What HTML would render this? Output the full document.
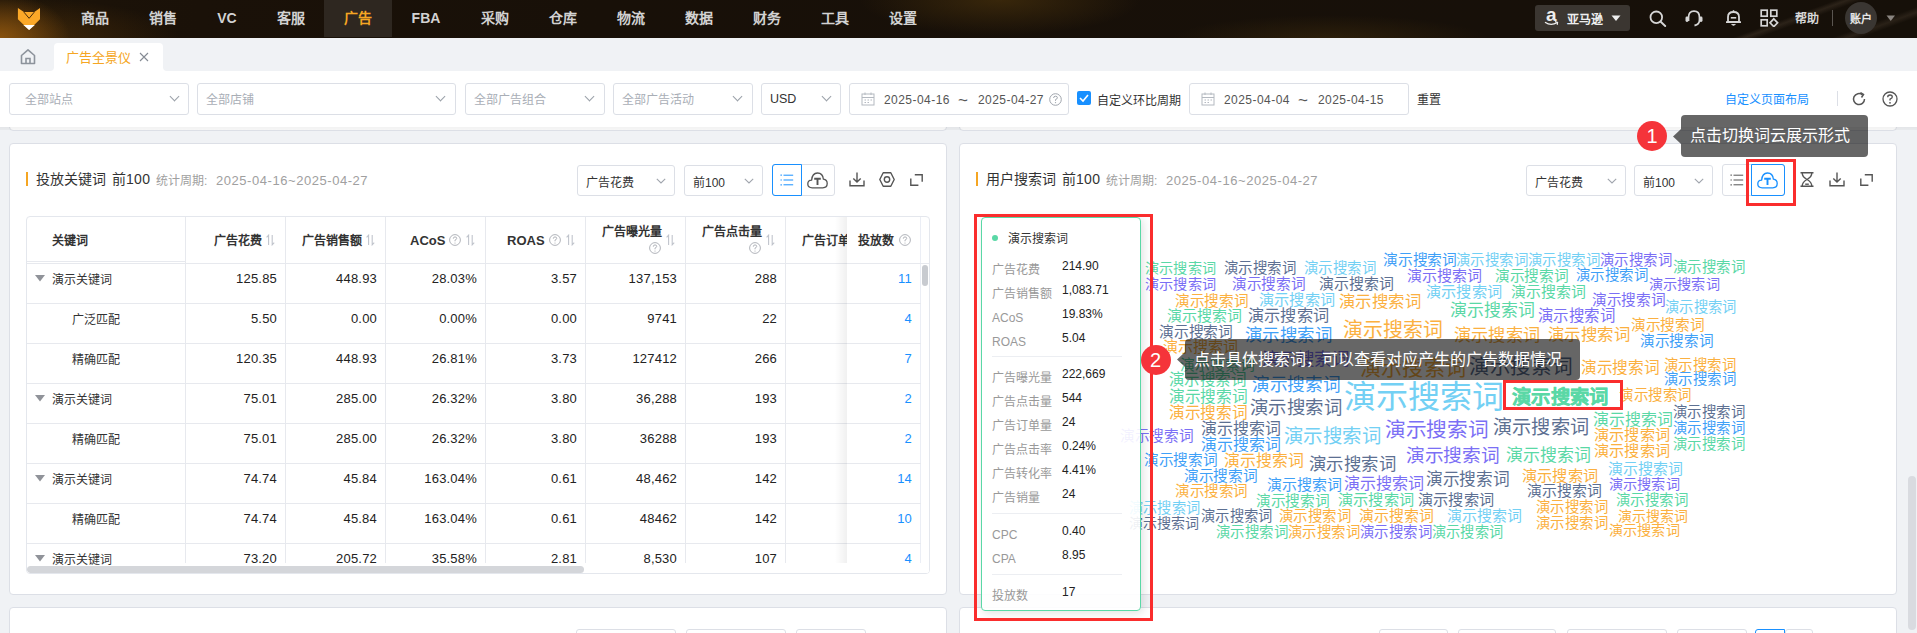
<!DOCTYPE html>
<html lang="zh-CN"><head><meta charset="utf-8">
<style>
*{box-sizing:border-box;margin:0;padding:0}
html,body{width:1917px;height:633px;overflow:hidden}
body{position:relative;background:#f0f2f5;font-family:"Liberation Sans",sans-serif;color:#333;font-size:12px}
.a{position:absolute}
/* header */
#hd{left:0;top:0;width:1917px;height:38px;background:
 radial-gradient(ellipse 70px 45px at 0 38px,rgba(150,90,15,.85),rgba(150,90,15,0) 100%),
 radial-gradient(ellipse 160px 40px at 20px 38px,rgba(90,55,10,.6),rgba(90,55,10,0) 100%),
 radial-gradient(ellipse 140px 35px at 1000px 0,rgba(70,48,12,.7),rgba(70,48,12,0) 100%),
 radial-gradient(ellipse 160px 25px at 1330px 40px,rgba(60,42,12,.6),rgba(60,42,12,0) 100%),
 linear-gradient(160deg,rgba(0,0,0,0) 628px,rgba(120,100,80,.22) 632px,rgba(0,0,0,0) 637px,rgba(0,0,0,0) 662px,rgba(120,100,80,.2) 667px,rgba(0,0,0,0) 672px),
 linear-gradient(90deg,#1c1308 0,#1a1108 200px,#181008 600px,#171009 1500px,#161009 1917px);}
.nav{top:0;height:37px;line-height:37px;font-size:14px;font-weight:bold;color:#d2d2d2;text-align:center}
.nav.on{background:#2e2720;color:#f5a623}
.sel{background:#fff;border:1px solid #dcdfe6;border-radius:3px;height:32px}
.ph{color:#a9aeb6;font-size:12px}
.chev{width:7px;height:7px;border-right:1.2px solid #9aa0a8;border-bottom:1.2px solid #9aa0a8;transform:rotate(45deg)}
.dt{top:9px;font-size:12px;color:#555;letter-spacing:0.45px}
.card{background:#fff;border:1px solid #dcdfe6;border-radius:4px}
</style></head><body>
<div id="hd" class="a">
  <svg class="a" style="left:17px;top:7px" width="24" height="24" viewBox="0 0 24 24">
    <path d="M0.9 1 L6.9 5.1 L17.3 5.1 L23 1 L23 12.2 L12.1 23.1 L0.9 12.2 Z" fill="#fba828"/>
    <path d="M6.9 5.1 L12.1 11.3 L17.3 5.1" fill="none" stroke="#4a2c08" stroke-width="1"/>
    <path d="M6.4 17.9 L17.8 17.9 L12.1 23.1 Z" fill="#fff"/>
  </svg>
</div>
<div class="a nav" style="left:61px;width:68px">商品</div>
<div class="a nav" style="left:129px;width:68px">销售</div>
<div class="a nav" style="left:197px;width:60px">VC</div>
<div class="a nav" style="left:257px;width:68px">客服</div>
<div class="a nav on" style="left:324px;width:68px">广告</div>
<div class="a nav" style="left:392px;width:68px">FBA</div>
<div class="a nav" style="left:461px;width:68px">采购</div>
<div class="a nav" style="left:529px;width:68px">仓库</div>
<div class="a nav" style="left:597px;width:68px">物流</div>
<div class="a nav" style="left:665px;width:68px">数据</div>
<div class="a nav" style="left:733px;width:68px">财务</div>
<div class="a nav" style="left:801px;width:68px">工具</div>
<div class="a nav" style="left:869px;width:68px">设置</div>

<!-- header right -->
<div class="a" style="left:1535px;top:5px;width:95px;height:26px;background:#3b3631;border-radius:3px"></div>
<span class="a" style="left:1546px;top:5px;font-size:19px;line-height:20px;font-weight:bold;color:#eee">a</span>
<svg class="a" style="left:1544px;top:21px" width="15" height="6" viewBox="0 0 15 6"><path d="M1 1.2 Q7 5.2 13 1.6" fill="none" stroke="#eee" stroke-width="1.3"/><path d="M11 0.6 L13.6 1.3 L13.2 3.8" fill="none" stroke="#eee" stroke-width="1.1"/></svg>
<span class="a" style="left:1567px;top:10px;font-size:12px;font-weight:bold;color:#eee">亚马逊</span>
<svg class="a" style="left:1611px;top:15px" width="10" height="7" viewBox="0 0 10 7"><path d="M0.5 0.5 H9.5 L5 6 Z" fill="#eee"/></svg>
<svg class="a" style="left:1649px;top:10px" width="18" height="17" viewBox="0 0 18 17"><circle cx="7.3" cy="7.3" r="5.8" fill="none" stroke="#d6d6d6" stroke-width="1.8"/><path d="M11.5 11.5 L16.2 16" stroke="#d6d6d6" stroke-width="1.9" stroke-linecap="round"/></svg>
<svg class="a" style="left:1684px;top:9px" width="20" height="18" viewBox="0 0 20 18"><path d="M4.5 12 V8.5 Q4.5 2.2 10 2.2 Q15.5 2.2 15.5 8.5 V11 Q15.5 15.5 10.5 16.5" fill="none" stroke="#d6d6d6" stroke-width="1.8"/><rect x="1.5" y="7.5" width="3" height="5.5" rx="1.4" fill="#d6d6d6"/><rect x="15.5" y="7.5" width="3" height="5.5" rx="1.4" fill="#d6d6d6"/></svg>
<svg class="a" style="left:1724px;top:9px" width="19" height="18" viewBox="0 0 19 18"><path d="M4 13 V8 Q4 3 9.5 3 Q15 3 15 8 V13 Z M2 13.2 H17" fill="none" stroke="#d6d6d6" stroke-width="1.8" stroke-linejoin="round"/><path d="M6.8 8.8 H12.2" stroke="#d6d6d6" stroke-width="1.6"/><path d="M7.6 15 Q9.5 17.5 11.4 15" fill="#d6d6d6" stroke="#d6d6d6" stroke-width="1.2"/><path d="M9.5 1.2 V3" stroke="#d6d6d6" stroke-width="1.5"/></svg>
<svg class="a" style="left:1760px;top:9px" width="19" height="18" viewBox="0 0 19 18"><rect x="1.2" y="1.2" width="6" height="6" fill="none" stroke="#d6d6d6" stroke-width="1.7"/><rect x="10.8" y="1.2" width="6" height="6" fill="none" stroke="#d6d6d6" stroke-width="1.7"/><rect x="1.2" y="10.8" width="6" height="6" fill="none" stroke="#d6d6d6" stroke-width="1.7"/><path d="M13.8 9.8 L17.6 13.8 L13.8 17.6 L10 13.8 Z" fill="none" stroke="#d6d6d6" stroke-width="1.7"/></svg>
<span class="a" style="left:1795px;top:9px;font-size:12px;font-weight:bold;color:#d6d6d6">帮助</span>
<div class="a" style="left:1832px;top:10px;width:1px;height:16px;background:#5a5550"></div>
<div class="a" style="left:1845px;top:2px;width:32px;height:32px;border-radius:50%;background:#3a3632"></div>
<span class="a" style="left:1850px;top:10px;font-size:11px;font-weight:bold;color:#e6e6e6;letter-spacing:-0.5px">账户</span>
<svg class="a" style="left:1886px;top:15px" width="10" height="7" viewBox="0 0 10 7"><path d="M0.5 0.5 H9 L4.75 6 Z" fill="#8a8580"/></svg>
<!-- tabs -->
<div class="a" style="left:0;top:38px;width:1917px;height:33px;background:#f0f2f5"></div>
<div class="a" style="left:50px;top:67px;width:117px;height:4px;background:#fff"></div>
<div class="a" style="left:50px;top:67px;width:4px;height:4px;background:#f0f2f5;border-radius:0 0 4px 0"></div>
<div class="a" style="left:163px;top:67px;width:4px;height:4px;background:#f0f2f5;border-radius:0 0 0 4px"></div>
<div class="a" style="left:54px;top:43px;width:109px;height:28px;background:#fff;border-radius:4px 4px 0 0"></div>
<div class="a" style="left:66px;top:44px;height:28px;line-height:28px;font-size:13px;color:#f5a623">广告全景仪</div>

<!-- home + tab extras -->
<svg class="a" style="left:20px;top:48px" width="16" height="17" viewBox="0 0 16 17">
 <path d="M1.5 7.5 L8 1.8 L14.5 7.5 L14.5 15.5 L1.5 15.5 Z" fill="none" stroke="#8d939c" stroke-width="1.6" stroke-linejoin="round"/>
 <path d="M6 15.5 V10.5 H10 V15.5" fill="none" stroke="#8d939c" stroke-width="1.6"/>
</svg>
<svg class="a" style="left:139px;top:52px" width="10" height="10" viewBox="0 0 10 10"><path d="M1 1 L9 9 M9 1 L1 9" stroke="#858b94" stroke-width="1.1"/></svg>
<!-- upper cards (behind filter) -->
<div class="a card" style="left:9px;top:100px;width:938px;height:31px"></div>
<div class="a card" style="left:959px;top:100px;width:938px;height:31px"></div>
<!-- filter bar -->
<div class="a" style="left:0;top:71px;width:1917px;height:56px;background:#fff"></div>
<div class="a" style="left:0;top:127px;width:1917px;height:3px;background:linear-gradient(rgba(0,0,0,0.05),rgba(0,0,0,0.035))"></div>
<div class="a sel" style="left:9px;top:83px;width:180px"><span class="a ph" style="left:15px;top:6px">全部站点</span><div class="a chev" style="left:161px;top:9px"></div></div>
<div class="a sel" style="left:197px;top:83px;width:259px"><span class="a ph" style="left:8px;top:6px">全部店铺</span><div class="a chev" style="left:239px;top:9px"></div></div>
<div class="a sel" style="left:465px;top:83px;width:140px"><span class="a ph" style="left:8px;top:6px">全部广告组合</span><div class="a chev" style="left:120px;top:9px"></div></div>
<div class="a sel" style="left:613px;top:83px;width:140px"><span class="a ph" style="left:8px;top:6px">全部广告活动</span><div class="a chev" style="left:120px;top:9px"></div></div>
<div class="a sel" style="left:761px;top:83px;width:80px"><span class="a" style="left:8px;top:8px;font-size:12.5px;color:#333">USD</span><div class="a chev" style="left:61px;top:9px"></div></div>
<div class="a sel" style="left:849px;top:83px;width:220px">
 <svg class="a" style="left:11px;top:8px" width="14" height="14" viewBox="0 0 14 14"><rect x="1" y="2" width="12" height="11" fill="none" stroke="#b4b9c0" stroke-width="1"/><path d="M1 5.5 H13 M4 0.5 V3 M10 0.5 V3 M3.5 8 H5 M6.5 8 H8 M9.5 8 H11 M3.5 10.5 H5 M6.5 10.5 H8" stroke="#b4b9c0" stroke-width="1"/></svg>
 <span class="a dt" style="left:34px">2025-04-16</span><span class="a dt" style="left:108px;top:6.5px;font-size:17px">~</span><span class="a dt" style="left:128px">2025-04-27</span>
 <svg class="a" style="left:199px;top:9px" width="13" height="13" viewBox="0 0 13 13"><circle cx="6.5" cy="6.5" r="5.8" fill="none" stroke="#a0a5ad" stroke-width="1"/><path d="M4.6 5 Q4.6 3.2 6.5 3.2 Q8.4 3.2 8.4 4.8 Q8.4 5.9 6.5 6.6 V7.8" fill="none" stroke="#a0a5ad" stroke-width="1"/><circle cx="6.5" cy="9.6" r="0.7" fill="#a0a5ad"/></svg>
</div>
<div class="a" style="left:1077px;top:91px;width:14px;height:14px;background:#1890ff;border-radius:2px"><svg class="a" style="left:0;top:0" width="14" height="14" viewBox="0 0 14 14"><path d="M3 7 L6 10 L11 4" fill="none" stroke="#fff" stroke-width="1.6"/></svg></div>
<span class="a" style="left:1097px;top:91px;font-size:12px;color:#333">自定义环比周期</span>
<div class="a sel" style="left:1189px;top:83px;width:220px">
 <svg class="a" style="left:11px;top:8px" width="14" height="14" viewBox="0 0 14 14"><rect x="1" y="2" width="12" height="11" fill="none" stroke="#b4b9c0" stroke-width="1"/><path d="M1 5.5 H13 M4 0.5 V3 M10 0.5 V3 M3.5 8 H5 M6.5 8 H8 M9.5 8 H11 M3.5 10.5 H5 M6.5 10.5 H8" stroke="#b4b9c0" stroke-width="1"/></svg>
 <span class="a dt" style="left:34px">2025-04-04</span><span class="a dt" style="left:108px;top:6.5px;font-size:17px">~</span><span class="a dt" style="left:128px">2025-04-15</span>
</div>
<span class="a" style="left:1417px;top:90px;font-size:12px;color:#333">重置</span>
<span class="a" style="left:1725px;top:89.5px;font-size:12px;color:#1890ff">自定义页面布局</span>
<div class="a" style="left:1837px;top:91px;width:1px;height:15px;background:#dcdfe6"></div>
<svg class="a" style="left:1851px;top:91px" width="16" height="16" viewBox="0 0 16 16"><path d="M13.5 8 A5.5 5.5 0 1 1 11.5 3.8" fill="none" stroke="#555" stroke-width="1.5"/><path d="M9.5 1.5 L12.5 3.5 L10.5 6.5" fill="none" stroke="#555" stroke-width="1.5"/></svg>
<svg class="a" style="left:1882px;top:91px" width="16" height="16" viewBox="0 0 16 16"><circle cx="8" cy="8" r="7" fill="none" stroke="#555" stroke-width="1.3"/><path d="M5.7 6.2 Q5.7 4 8 4 Q10.3 4 10.3 6 Q10.3 7.3 8 8.2 V9.6" fill="none" stroke="#555" stroke-width="1.3"/><circle cx="8" cy="11.8" r="0.9" fill="#555"/></svg>
<style>
.th{font-size:12px;font-weight:bold;color:#333;white-space:nowrap}
.td{font-size:12px;color:#333;white-space:nowrap}
.num{font-size:13px;color:#222;white-space:nowrap;letter-spacing:0.2px}
</style><div class="a card" style="left:9px;top:143px;width:938px;height:452px"></div>
<div class="a card" style="left:959px;top:143px;width:938px;height:452px"></div>
<div class="a card" style="left:9px;top:607px;width:938px;height:60px"></div>
<div class="a card" style="left:959px;top:607px;width:938px;height:60px"></div>
<div class="a sel" style="left:576px;top:629px;width:100px;height:31px"></div>
<div class="a sel" style="left:686px;top:629px;width:100px;height:31px"></div>
<div class="a sel" style="left:796px;top:629px;width:70px;height:31px"></div>
<div class="a sel" style="left:1379px;top:629px;width:69px;height:31px"></div>
<div class="a sel" style="left:1458px;top:629px;width:98px;height:31px"></div>
<div class="a sel" style="left:1567px;top:629px;width:100px;height:31px"></div>
<div class="a sel" style="left:1677px;top:629px;width:70px;height:31px"></div>
<div class="a sel" style="left:1785px;top:629px;width:28px;height:31px"></div>
<div class="a" style="left:1755px;top:629px;width:30px;height:31px;border:1px solid #1890ff;border-radius:3px 0 0 3px;background:#fff"></div>
<div class="a" style="left:26px;top:172px;width:2px;height:14px;background:#f5a623"></div>
<span class="a" style="left:36px;top:171px;font-size:14px;line-height:16px;color:#333;white-space:nowrap">投放关键词</span>
<span class="a" style="left:111.5px;top:171px;font-size:14px;line-height:16px;color:#333;white-space:nowrap;letter-spacing:0.4px">前100</span>
<span class="a" style="left:156px;top:174px;font-size:12px;line-height:14px;color:#a0a0a0;white-space:nowrap">统计周期:</span>
<span class="a" style="left:216px;top:173px;font-size:13px;line-height:15px;color:#a0a0a0;white-space:nowrap;letter-spacing:0.55px">2025-04-16~2025-04-27</span>
<div class="a" style="left:976px;top:172px;width:2px;height:14px;background:#f5a623"></div>
<span class="a" style="left:986px;top:171px;font-size:14px;line-height:16px;color:#333;white-space:nowrap">用户搜索词</span>
<span class="a" style="left:1061.5px;top:171px;font-size:14px;line-height:16px;color:#333;white-space:nowrap;letter-spacing:0.4px">前100</span>
<span class="a" style="left:1106px;top:174px;font-size:12px;line-height:14px;color:#a0a0a0;white-space:nowrap">统计周期:</span>
<span class="a" style="left:1166px;top:173px;font-size:13px;line-height:15px;color:#a0a0a0;white-space:nowrap;letter-spacing:0.55px">2025-04-16~2025-04-27</span>
<div class="a sel" style="left:577px;top:165px;width:98px;height:31px"><span class="a" style="left:8px;top:7px;font-size:12px;color:#333">广告花费</span><svg class="a" style="left:78px;top:12px" width="10" height="6" viewBox="0 0 10 6"><path d="M0.8 0.8 L5 5 L9.2 0.8" fill="none" stroke="#a0a5ad" stroke-width="1.1"/></svg></div>
<div class="a sel" style="left:684px;top:165px;width:79px;height:31px"><span class="a" style="left:8px;top:7px;font-size:12px;color:#333">前100</span><svg class="a" style="left:59px;top:12px" width="10" height="6" viewBox="0 0 10 6"><path d="M0.8 0.8 L5 5 L9.2 0.8" fill="none" stroke="#a0a5ad" stroke-width="1.1"/></svg></div>
<div class="a" style="left:772px;top:164px;width:63px;height:32px;border:1px solid #dcdfe6;border-radius:3px;background:#fff"></div>
<div class="a" style="left:772px;top:164px;width:30px;height:32px;border:1px solid #1890ff;border-radius:3px 0 0 3px"></div>
<svg class="a" style="left:780px;top:174px" width="14" height="12" viewBox="0 0 14 12"><path d="M0.5 1.2 H1.8 M0.5 6 H1.8 M0.5 10.8 H1.8" stroke="#1890ff" stroke-width="1.2"/><path d="M3.5 1.2 H13.2 M3.5 6 H13.2 M3.5 10.8 H13.2" stroke="#1890ff" stroke-width="1"/></svg>
<svg class="a" style="left:807px;top:172px" width="21" height="17" viewBox="0 0 21 17"><path d="M5.2 15.8 Q0.8 15.8 0.8 12 Q0.8 8.4 4.6 8.2 Q5.2 1 10.5 1 Q15.8 1 16.4 7.2 Q20.2 7.8 20.2 11.6 Q20.2 15.8 15.8 15.8 Z" fill="none" stroke="#555" stroke-width="1.3" stroke-linejoin="round"/><path d="M7.2 6.8 H13.8 M10.5 6.8 V13" stroke="#555" stroke-width="1.9"/></svg>
<svg class="a" style="left:849px;top:172px" width="16" height="15" viewBox="0 0 16 15"><path d="M1 8.5 V13.8 H15 V8.5" fill="none" stroke="#555" stroke-width="1.4"/><path d="M8 0.5 V10 M4.3 6.4 L8 10.1 L11.7 6.4" fill="none" stroke="#555" stroke-width="1.4"/></svg>
<svg class="a" style="left:879px;top:172px" width="16" height="15" viewBox="0 0 16 15"><path d="M4.2 0.8 H11.8 L15.2 7.5 L11.8 14.2 H4.2 L0.8 7.5 Z" fill="none" stroke="#555" stroke-width="1.4" stroke-linejoin="round"/><circle cx="8" cy="7.5" r="2.7" fill="none" stroke="#555" stroke-width="1.4"/></svg>
<svg class="a" style="left:910px;top:174px" width="13" height="12" viewBox="0 0 13 12"><path d="M4.8 0.8 H12.2 V7.8" fill="none" stroke="#555" stroke-width="1.4"/><path d="M0.8 4.5 V11.2 H8.4" fill="none" stroke="#555" stroke-width="1.4"/></svg>
<div class="a sel" style="left:1526px;top:165px;width:100px;height:31px"><span class="a" style="left:8px;top:7px;font-size:12px;color:#333">广告花费</span><svg class="a" style="left:80px;top:12px" width="10" height="6" viewBox="0 0 10 6"><path d="M0.8 0.8 L5 5 L9.2 0.8" fill="none" stroke="#a0a5ad" stroke-width="1.1"/></svg></div>
<div class="a sel" style="left:1634px;top:165px;width:79px;height:31px"><span class="a" style="left:8px;top:7px;font-size:12px;color:#333">前100</span><svg class="a" style="left:59px;top:12px" width="10" height="6" viewBox="0 0 10 6"><path d="M0.8 0.8 L5 5 L9.2 0.8" fill="none" stroke="#a0a5ad" stroke-width="1.1"/></svg></div>
<div class="a" style="left:1722px;top:164px;width:63px;height:32px;border:1px solid #dcdfe6;border-radius:3px;background:#fff"></div>
<div class="a" style="left:1751px;top:164px;width:34px;height:32px;border:1px solid #1890ff;border-radius:0 3px 3px 0"></div>
<svg class="a" style="left:1730px;top:174px" width="14" height="12" viewBox="0 0 14 12"><path d="M0.5 1.2 H1.8 M0.5 6 H1.8 M0.5 10.8 H1.8" stroke="#555" stroke-width="1.2"/><path d="M3.5 1.2 H13.2 M3.5 6 H13.2 M3.5 10.8 H13.2" stroke="#555" stroke-width="1"/></svg>
<svg class="a" style="left:1757px;top:172px" width="21" height="17" viewBox="0 0 21 17"><path d="M5.2 15.8 Q0.8 15.8 0.8 12 Q0.8 8.4 4.6 8.2 Q5.2 1 10.5 1 Q15.8 1 16.4 7.2 Q20.2 7.8 20.2 11.6 Q20.2 15.8 15.8 15.8 Z" fill="none" stroke="#1890ff" stroke-width="1.3" stroke-linejoin="round"/><path d="M7.2 6.8 H13.8 M10.5 6.8 V13" stroke="#1890ff" stroke-width="1.9"/></svg>
<svg class="a" style="left:1800px;top:172px" width="14" height="15" viewBox="0 0 14 15"><path d="M0.5 0.8 H13.5 M0.5 14.2 H13.5" stroke="#555" stroke-width="1.4"/><path d="M2.2 0.8 Q2.2 5 7 7.5 Q11.8 5 11.8 0.8 M2.2 14.2 Q2.2 10 7 7.5 Q11.8 10 11.8 14.2" fill="none" stroke="#555" stroke-width="1.4"/><path d="M5.2 12.2 H8.8" stroke="#555" stroke-width="1.4"/></svg>
<svg class="a" style="left:1829px;top:172px" width="16" height="15" viewBox="0 0 16 15"><path d="M1 8.5 V13.8 H15 V8.5" fill="none" stroke="#555" stroke-width="1.4"/><path d="M8 0.5 V10 M4.3 6.4 L8 10.1 L11.7 6.4" fill="none" stroke="#555" stroke-width="1.4"/></svg>
<svg class="a" style="left:1860px;top:174px" width="13" height="12" viewBox="0 0 13 12"><path d="M4.8 0.8 H12.2 V7.8" fill="none" stroke="#555" stroke-width="1.4"/><path d="M0.8 4.5 V11.2 H8.4" fill="none" stroke="#555" stroke-width="1.4"/></svg>
<div class="a" style="left:26px;top:216px;width:904px;height:358px;border:1px solid #e4e7ed;border-radius:4px;background:#fff"></div>
<div class="a" style="left:27px;top:217px;width:902px;height:356px;border-radius:3px;overflow:hidden" id="tbl">
<div class="a" style="left:158px;top:0;width:1px;height:346px;background:#e7e9ee"></div><div class="a" style="left:258px;top:0;width:1px;height:346px;background:#e7e9ee"></div><div class="a" style="left:358px;top:0;width:1px;height:346px;background:#e7e9ee"></div><div class="a" style="left:458px;top:0;width:1px;height:346px;background:#e7e9ee"></div><div class="a" style="left:558px;top:0;width:1px;height:346px;background:#e7e9ee"></div><div class="a" style="left:658px;top:0;width:1px;height:346px;background:#e7e9ee"></div><div class="a" style="left:758px;top:0;width:1px;height:346px;background:#e7e9ee"></div><div class="a" style="left:0;top:46px;width:903px;height:1px;background:#e7e9ee"></div><div class="a" style="left:0;top:44px;width:158px;height:1px;background:#e7e9ee"></div><div class="a" style="left:0;top:86px;width:903px;height:1px;background:#e7e9ee"></div><div class="a" style="left:0;top:126px;width:903px;height:1px;background:#e7e9ee"></div><div class="a" style="left:0;top:166px;width:903px;height:1px;background:#e7e9ee"></div><div class="a" style="left:0;top:206px;width:903px;height:1px;background:#e7e9ee"></div><div class="a" style="left:0;top:246px;width:903px;height:1px;background:#e7e9ee"></div><div class="a" style="left:0;top:286px;width:903px;height:1px;background:#e7e9ee"></div><div class="a" style="left:0;top:326px;width:903px;height:1px;background:#e7e9ee"></div><span class="a th" style="left:25px;top:14px">关键词</span><span class="a th" style="left:187px;top:14px">广告花费</span><svg class="a" style="left:239px;top:17px" width="9" height="12" viewBox="0 0 9 12"><path d="M2.6 11 V1.2 L0.6 3.4" fill="none" stroke="#c0c4cc" stroke-width="1.1"/><path d="M6.2 1 V10.8 L8.2 8.6" fill="none" stroke="#c0c4cc" stroke-width="1.1"/></svg><span class="a th" style="left:275px;top:14px">广告销售额</span><svg class="a" style="left:339px;top:17px" width="9" height="12" viewBox="0 0 9 12"><path d="M2.6 11 V1.2 L0.6 3.4" fill="none" stroke="#c0c4cc" stroke-width="1.1"/><path d="M6.2 1 V10.8 L8.2 8.6" fill="none" stroke="#c0c4cc" stroke-width="1.1"/></svg><span class="a th" style="left:383px;top:16px;font-size:13px">ACoS</span><svg class="a" style="left:422px;top:17px" width="12" height="12" viewBox="0 0 12 12"><circle cx="6" cy="6" r="5.4" fill="none" stroke="#a8abb2" stroke-width="0.9"/><path d="M4.3 4.7 Q4.3 2.9 6 2.9 Q7.7 2.9 7.7 4.4 Q7.7 5.5 6 6.1 V7.3" fill="none" stroke="#a8abb2" stroke-width="0.9"/><circle cx="6" cy="9" r="0.6" fill="#a8abb2"/></svg><svg class="a" style="left:439px;top:17px" width="9" height="12" viewBox="0 0 9 12"><path d="M2.6 11 V1.2 L0.6 3.4" fill="none" stroke="#c0c4cc" stroke-width="1.1"/><path d="M6.2 1 V10.8 L8.2 8.6" fill="none" stroke="#c0c4cc" stroke-width="1.1"/></svg><span class="a th" style="left:480px;top:16px;font-size:13px">ROAS</span><svg class="a" style="left:522px;top:17px" width="12" height="12" viewBox="0 0 12 12"><circle cx="6" cy="6" r="5.4" fill="none" stroke="#a8abb2" stroke-width="0.9"/><path d="M4.3 4.7 Q4.3 2.9 6 2.9 Q7.7 2.9 7.7 4.4 Q7.7 5.5 6 6.1 V7.3" fill="none" stroke="#a8abb2" stroke-width="0.9"/><circle cx="6" cy="9" r="0.6" fill="#a8abb2"/></svg><svg class="a" style="left:539px;top:17px" width="9" height="12" viewBox="0 0 9 12"><path d="M2.6 11 V1.2 L0.6 3.4" fill="none" stroke="#c0c4cc" stroke-width="1.1"/><path d="M6.2 1 V10.8 L8.2 8.6" fill="none" stroke="#c0c4cc" stroke-width="1.1"/></svg><span class="a th" style="left:575px;top:5px">广告曝光量</span><svg class="a" style="left:622px;top:25px" width="12" height="12" viewBox="0 0 12 12"><circle cx="6" cy="6" r="5.4" fill="none" stroke="#a8abb2" stroke-width="0.9"/><path d="M4.3 4.7 Q4.3 2.9 6 2.9 Q7.7 2.9 7.7 4.4 Q7.7 5.5 6 6.1 V7.3" fill="none" stroke="#a8abb2" stroke-width="0.9"/><circle cx="6" cy="9" r="0.6" fill="#a8abb2"/></svg><svg class="a" style="left:639px;top:17px" width="9" height="12" viewBox="0 0 9 12"><path d="M2.6 11 V1.2 L0.6 3.4" fill="none" stroke="#c0c4cc" stroke-width="1.1"/><path d="M6.2 1 V10.8 L8.2 8.6" fill="none" stroke="#c0c4cc" stroke-width="1.1"/></svg><span class="a th" style="left:675px;top:5px">广告点击量</span><svg class="a" style="left:722px;top:25px" width="12" height="12" viewBox="0 0 12 12"><circle cx="6" cy="6" r="5.4" fill="none" stroke="#a8abb2" stroke-width="0.9"/><path d="M4.3 4.7 Q4.3 2.9 6 2.9 Q7.7 2.9 7.7 4.4 Q7.7 5.5 6 6.1 V7.3" fill="none" stroke="#a8abb2" stroke-width="0.9"/><circle cx="6" cy="9" r="0.6" fill="#a8abb2"/></svg><svg class="a" style="left:739px;top:17px" width="9" height="12" viewBox="0 0 9 12"><path d="M2.6 11 V1.2 L0.6 3.4" fill="none" stroke="#c0c4cc" stroke-width="1.1"/><path d="M6.2 1 V10.8 L8.2 8.6" fill="none" stroke="#c0c4cc" stroke-width="1.1"/></svg><span class="a th" style="left:775px;top:14px">广告订单量</span><svg class="a" style="left:8px;top:58px" width="10" height="7" viewBox="0 0 10 7"><path d="M0 0 H10 L5 6.5 Z" fill="#909399"/></svg><span class="a td" style="left:25px;top:53px">演示关键词</span><span class="a num" style="right:652px;top:53.5px">125.85</span><span class="a num" style="right:552px;top:53.5px">448.93</span><span class="a num" style="right:452px;top:53.5px">28.03%</span><span class="a num" style="right:352px;top:53.5px">3.57</span><span class="a num" style="right:252px;top:53.5px">137,153</span><span class="a num" style="right:152px;top:53.5px">288</span><span class="a td" style="left:45px;top:93px">广泛匹配</span><span class="a num" style="right:652px;top:93.5px">5.50</span><span class="a num" style="right:552px;top:93.5px">0.00</span><span class="a num" style="right:452px;top:93.5px">0.00%</span><span class="a num" style="right:352px;top:93.5px">0.00</span><span class="a num" style="right:252px;top:93.5px">9741</span><span class="a num" style="right:152px;top:93.5px">22</span><span class="a td" style="left:45px;top:133px">精确匹配</span><span class="a num" style="right:652px;top:133.5px">120.35</span><span class="a num" style="right:552px;top:133.5px">448.93</span><span class="a num" style="right:452px;top:133.5px">26.81%</span><span class="a num" style="right:352px;top:133.5px">3.73</span><span class="a num" style="right:252px;top:133.5px">127412</span><span class="a num" style="right:152px;top:133.5px">266</span><svg class="a" style="left:8px;top:178px" width="10" height="7" viewBox="0 0 10 7"><path d="M0 0 H10 L5 6.5 Z" fill="#909399"/></svg><span class="a td" style="left:25px;top:173px">演示关键词</span><span class="a num" style="right:652px;top:173.5px">75.01</span><span class="a num" style="right:552px;top:173.5px">285.00</span><span class="a num" style="right:452px;top:173.5px">26.32%</span><span class="a num" style="right:352px;top:173.5px">3.80</span><span class="a num" style="right:252px;top:173.5px">36,288</span><span class="a num" style="right:152px;top:173.5px">193</span><span class="a td" style="left:45px;top:213px">精确匹配</span><span class="a num" style="right:652px;top:213.5px">75.01</span><span class="a num" style="right:552px;top:213.5px">285.00</span><span class="a num" style="right:452px;top:213.5px">26.32%</span><span class="a num" style="right:352px;top:213.5px">3.80</span><span class="a num" style="right:252px;top:213.5px">36288</span><span class="a num" style="right:152px;top:213.5px">193</span><svg class="a" style="left:8px;top:258px" width="10" height="7" viewBox="0 0 10 7"><path d="M0 0 H10 L5 6.5 Z" fill="#909399"/></svg><span class="a td" style="left:25px;top:253px">演示关键词</span><span class="a num" style="right:652px;top:253.5px">74.74</span><span class="a num" style="right:552px;top:253.5px">45.84</span><span class="a num" style="right:452px;top:253.5px">163.04%</span><span class="a num" style="right:352px;top:253.5px">0.61</span><span class="a num" style="right:252px;top:253.5px">48,462</span><span class="a num" style="right:152px;top:253.5px">142</span><span class="a td" style="left:45px;top:293px">精确匹配</span><span class="a num" style="right:652px;top:293.5px">74.74</span><span class="a num" style="right:552px;top:293.5px">45.84</span><span class="a num" style="right:452px;top:293.5px">163.04%</span><span class="a num" style="right:352px;top:293.5px">0.61</span><span class="a num" style="right:252px;top:293.5px">48462</span><span class="a num" style="right:152px;top:293.5px">142</span><svg class="a" style="left:8px;top:338px" width="10" height="7" viewBox="0 0 10 7"><path d="M0 0 H10 L5 6.5 Z" fill="#909399"/></svg><span class="a td" style="left:25px;top:333px">演示关键词</span><span class="a num" style="right:652px;top:333.5px">73.20</span><span class="a num" style="right:552px;top:333.5px">205.72</span><span class="a num" style="right:452px;top:333.5px">35.58%</span><span class="a num" style="right:352px;top:333.5px">2.81</span><span class="a num" style="right:252px;top:333.5px">8,530</span><span class="a num" style="right:152px;top:333.5px">107</span><div class="a" style="left:808px;top:0;width:12px;height:346px;background:linear-gradient(90deg,rgba(0,0,0,0),rgba(0,0,0,0.06))"></div><div class="a" style="left:820px;top:0;width:74px;height:346px;background:#fff;border-right:1px solid #ebeef5"></div><div class="a" style="left:820px;top:46px;width:74px;height:1px;background:#e7e9ee"></div><div class="a" style="left:820px;top:86px;width:74px;height:1px;background:#e7e9ee"></div><div class="a" style="left:820px;top:126px;width:74px;height:1px;background:#e7e9ee"></div><div class="a" style="left:820px;top:166px;width:74px;height:1px;background:#e7e9ee"></div><div class="a" style="left:820px;top:206px;width:74px;height:1px;background:#e7e9ee"></div><div class="a" style="left:820px;top:246px;width:74px;height:1px;background:#e7e9ee"></div><div class="a" style="left:820px;top:286px;width:74px;height:1px;background:#e7e9ee"></div><div class="a" style="left:820px;top:326px;width:74px;height:1px;background:#e7e9ee"></div><span class="a th" style="left:831px;top:14px">投放数</span><svg class="a" style="left:872px;top:17px" width="12" height="12" viewBox="0 0 12 12"><circle cx="6" cy="6" r="5.4" fill="none" stroke="#a8abb2" stroke-width="0.9"/><path d="M4.3 4.7 Q4.3 2.9 6 2.9 Q7.7 2.9 7.7 4.4 Q7.7 5.5 6 6.1 V7.3" fill="none" stroke="#a8abb2" stroke-width="0.9"/><circle cx="6" cy="9" r="0.6" fill="#a8abb2"/></svg><span class="a num" style="right:17px;top:53.5px;color:#1890ff">11</span><span class="a num" style="right:17px;top:93.5px;color:#1890ff">4</span><span class="a num" style="right:17px;top:133.5px;color:#1890ff">7</span><span class="a num" style="right:17px;top:173.5px;color:#1890ff">2</span><span class="a num" style="right:17px;top:213.5px;color:#1890ff">2</span><span class="a num" style="right:17px;top:253.5px;color:#1890ff">14</span><span class="a num" style="right:17px;top:293.5px;color:#1890ff">10</span><span class="a num" style="right:17px;top:333.5px;color:#1890ff">4</span><div class="a" style="left:894px;top:47px;width:8px;height:310px;background:#fff"></div><div class="a" style="left:895px;top:48px;width:6px;height:21px;background:#c8cbd0;border-radius:3px"></div><div class="a" style="left:0;top:349px;width:903px;height:8px;background:#fff"></div><div class="a" style="left:0;top:349px;width:557px;height:7px;background:#d4d6da;border-radius:4px"></div>
</div>
<div class="a" style="left:1908px;top:476px;width:8px;height:154px;background:#d9dbe0;border-radius:4px"></div>
<style>.wd{position:absolute;line-height:1;white-space:nowrap;transform-origin:0 0}.tt{font-size:12px;line-height:16px;white-space:nowrap}</style><span class="wd" style="left:1144.7px;top:260.9px;font-size:14px;transform:scale(1.0134);color:#5ad8a6">演示搜索词</span>
<span class="wd" style="left:1224.3px;top:260.5px;font-size:14px;transform:scale(1.0308);color:#5d7092">演示搜索词</span>
<span class="wd" style="left:1303.8px;top:260.5px;font-size:14px;transform:scale(1.0322);color:#73d0f4">演示搜索词</span>
<span class="wd" style="left:1383.4px;top:252.0px;font-size:14px;transform:scale(1.0540);color:#3fa0f7">演示搜索词</span>
<span class="wd" style="left:1456.0px;top:252.5px;font-size:14px;transform:scale(1.0308);color:#73d0f4">演示搜索词</span>
<span class="wd" style="left:1528.0px;top:252.5px;font-size:14px;transform:scale(1.0308);color:#73d0f4">演示搜索词</span>
<span class="wd" style="left:1600.4px;top:252.5px;font-size:14px;transform:scale(1.0308);color:#7b6ff5">演示搜索词</span>
<span class="wd" style="left:1672.6px;top:260.0px;font-size:14px;transform:scale(1.0308);color:#5ad8a6">演示搜索词</span>
<span class="wd" style="left:1144.7px;top:276.8px;font-size:14px;transform:scale(1.0134);color:#7b6ff5">演示搜索词</span>
<span class="wd" style="left:1231.6px;top:276.4px;font-size:14px;transform:scale(1.0482);color:#7b6ff5">演示搜索词</span>
<span class="wd" style="left:1318.5px;top:276.2px;font-size:14px;transform:scale(1.0671);color:#5d7092">演示搜索词</span>
<span class="wd" style="left:1406.7px;top:267.8px;font-size:14px;transform:scale(1.0700);color:#7b6ff5">演示搜索词</span>
<span class="wd" style="left:1495.0px;top:268.0px;font-size:14px;transform:scale(1.0497);color:#5ad8a6">演示搜索词</span>
<span class="wd" style="left:1575.9px;top:268.1px;font-size:14px;transform:scale(1.0308);color:#3fa0f7">演示搜索词</span>
<span class="wd" style="left:1649.4px;top:276.8px;font-size:14px;transform:scale(1.0119);color:#7b6ff5">演示搜索词</span>
<span class="wd" style="left:1175.3px;top:292.5px;font-size:14px;transform:scale(1.0482);color:#fbb040">演示搜索词</span>
<span class="wd" style="left:1258.5px;top:292.1px;font-size:15px;transform:scale(1.0122);color:#73d0f4">演示搜索词</span>
<span class="wd" style="left:1339.4px;top:294.0px;font-size:16px;transform:scale(1.0264);color:#fbb040">演示搜索词</span>
<span class="wd" style="left:1426.3px;top:283.6px;font-size:15px;transform:scale(1.0149);color:#73d0f4">演示搜索词</span>
<span class="wd" style="left:1511.0px;top:283.7px;font-size:14px;transform:scale(1.0671);color:#5ad8a6">演示搜索词</span>
<span class="wd" style="left:1591.8px;top:292.4px;font-size:14px;transform:scale(1.0482);color:#7b6ff5">演示搜索词</span>
<span class="wd" style="left:1664.8px;top:300.0px;font-size:14px;transform:scale(1.0192);color:#73d0f4">演示搜索词</span>
<span class="wd" style="left:1166.7px;top:308.2px;font-size:14px;transform:scale(1.0671);color:#5ad8a6">演示搜索词</span>
<span class="wd" style="left:1247.5px;top:307.6px;font-size:16px;transform:scale(1.0112);color:#5d7092">演示搜索词</span>
<span class="wd" style="left:1343.0px;top:320.4px;font-size:19px;transform:scale(1.0484);color:#fbb040">演示搜索词</span>
<span class="wd" style="left:1449.8px;top:302.2px;font-size:16px;transform:scale(1.0569);color:#5ad8a6">演示搜索词</span>
<span class="wd" style="left:1538.0px;top:308.0px;font-size:15px;transform:scale(1.0271);color:#7b6ff5">演示搜索词</span>
<span class="wd" style="left:1631.0px;top:317.0px;font-size:14px;transform:scale(1.0482);color:#fbb040">演示搜索词</span>
<span class="wd" style="left:1158.9px;top:324.3px;font-size:14px;transform:scale(1.0555);color:#5d7092">演示搜索词</span>
<span class="wd" style="left:1245.0px;top:326.6px;font-size:17px;transform:scale(1.0258);color:#3fa0f7">演示搜索词</span>
<span class="wd" style="left:1453.5px;top:326.7px;font-size:17px;transform:scale(1.0103);color:#fbb040">演示搜索词</span>
<span class="wd" style="left:1547.7px;top:327.1px;font-size:16px;transform:scale(1.0264);color:#fbb040">演示搜索词</span>
<span class="wd" style="left:1639.6px;top:332.9px;font-size:14px;transform:scale(1.0482);color:#3fa0f7">演示搜索词</span>
<span class="wd" style="left:1162.5px;top:339.0px;font-size:15px;transform:scale(1.0027);color:#fbb040">演示搜索词</span>
<span class="wd" style="left:1179.6px;top:356.6px;font-size:14px;transform:scale(1.0627);color:#5ad8a6">演示搜索词</span>
<span class="wd" style="left:1262.0px;top:350.5px;font-size:17px;transform:scale(1.0282);color:#7b6ff5">演示搜索词</span>
<span class="wd" style="left:1359.5px;top:356.9px;font-size:21px;transform:scale(1.0105);color:#fbb040">演示搜索词</span>
<span class="wd" style="left:1469.0px;top:355.9px;font-size:20px;transform:scale(1.0346);color:#5d7092">演示搜索词</span>
<span class="wd" style="left:1580.8px;top:359.3px;font-size:15px;transform:scale(1.0461);color:#fbb040">演示搜索词</span>
<span class="wd" style="left:1664.0px;top:357.5px;font-size:14px;transform:scale(1.0308);color:#fbb040">演示搜索词</span>
<span class="wd" style="left:1664.0px;top:372.2px;font-size:14px;transform:scale(1.0308);color:#3fa0f7">演示搜索词</span>
<span class="wd" style="left:1169.0px;top:371.7px;font-size:15px;transform:scale(1.0298);color:#5ad8a6">演示搜索词</span>
<span class="wd" style="left:1252.4px;top:375.5px;font-size:17px;transform:scale(1.0402);color:#3fa0f7">演示搜索词</span>
<span class="wd" style="left:1169.0px;top:387.8px;font-size:15px;transform:scale(1.0474);color:#5ad8a6">演示搜索词</span>
<span class="wd" style="left:1169.0px;top:403.8px;font-size:15px;transform:scale(1.0474);color:#fbb040">演示搜索词</span>
<span class="wd" style="left:1250.0px;top:398.9px;font-size:18px;transform:scale(1.0230);color:#5d7092">演示搜索词</span>
<span class="wd" style="left:1344.0px;top:380.7px;font-size:32px;transform:scale(1.0017);color:#73d0f4">演示搜索词</span>
<span class="wd" style="left:1511.5px;top:387.8px;font-size:19px;transform:scale(1.0158);color:#5ad8a6;font-weight:bold;-webkit-text-stroke:0.35px #5ad8a6">演示搜索词</span>
<span class="wd" style="left:1618.5px;top:387.8px;font-size:14px;transform:scale(1.0380);color:#fbb040">演示搜索词</span>
<span class="wd" style="left:1672.6px;top:404.5px;font-size:14px;transform:scale(1.0308);color:#5d7092">演示搜索词</span>
<span class="wd" style="left:1672.6px;top:421.2px;font-size:14px;transform:scale(1.0308);color:#3fa0f7">演示搜索词</span>
<span class="wd" style="left:1672.6px;top:436.9px;font-size:14px;transform:scale(1.0308);color:#5ad8a6">演示搜索词</span>
<span class="wd" style="left:1593.0px;top:411.1px;font-size:15px;transform:scale(1.0623);color:#5ad8a6">演示搜索词</span>
<span class="wd" style="left:1594.3px;top:427.4px;font-size:15px;transform:scale(1.0122);color:#fbb040">演示搜索词</span>
<span class="wd" style="left:1594.3px;top:443.3px;font-size:15px;transform:scale(1.0122);color:#fbb040">演示搜索词</span>
<span class="wd" style="left:1120.3px;top:428.4px;font-size:14px;transform:scale(1.0467);color:#7b6ff5">演示搜索词</span>
<span class="wd" style="left:1201.0px;top:419.7px;font-size:15px;transform:scale(1.0623);color:#5d7092">演示搜索词</span>
<span class="wd" style="left:1201.0px;top:435.6px;font-size:15px;transform:scale(1.0623);color:#3fa0f7">演示搜索词</span>
<span class="wd" style="left:1284.3px;top:426.5px;font-size:19px;transform:scale(1.0216);color:#73d0f4">演示搜索词</span>
<span class="wd" style="left:1384.7px;top:418.6px;font-size:20px;transform:scale(1.0346);color:#7b6ff5">演示搜索词</span>
<span class="wd" style="left:1492.6px;top:418.1px;font-size:19px;transform:scale(1.0098);color:#5d7092">演示搜索词</span>
<span class="wd" style="left:1143.5px;top:452.2px;font-size:14px;transform:scale(1.0482);color:#3fa0f7">演示搜索词</span>
<span class="wd" style="left:1224.3px;top:451.5px;font-size:15px;transform:scale(1.0610);color:#fbb040">演示搜索词</span>
<span class="wd" style="left:1308.7px;top:455.7px;font-size:17px;transform:scale(1.0246);color:#5d7092">演示搜索词</span>
<span class="wd" style="left:1405.5px;top:446.4px;font-size:18px;transform:scale(1.0388);color:#7b6ff5">演示搜索词</span>
<span class="wd" style="left:1506.0px;top:447.2px;font-size:16px;transform:scale(1.0595);color:#5ad8a6">演示搜索词</span>
<span class="wd" style="left:1183.9px;top:468.1px;font-size:14px;transform:scale(1.0467);color:#3fa0f7">演示搜索词</span>
<span class="wd" style="left:1267.0px;top:476.5px;font-size:14px;transform:scale(1.0685);color:#3fa0f7">演示搜索词</span>
<span class="wd" style="left:1344.0px;top:476.0px;font-size:16px;transform:scale(1.0036);color:#7b6ff5">演示搜索词</span>
<span class="wd" style="left:1426.3px;top:471.3px;font-size:16px;transform:scale(1.0455);color:#5d7092">演示搜索词</span>
<span class="wd" style="left:1522.0px;top:467.8px;font-size:15px;transform:scale(1.0122);color:#fbb040">演示搜索词</span>
<span class="wd" style="left:1607.7px;top:460.6px;font-size:14px;transform:scale(1.0671);color:#73d0f4">演示搜索词</span>
<span class="wd" style="left:1609.0px;top:476.9px;font-size:14px;transform:scale(1.0119);color:#7b6ff5">演示搜索词</span>
<span class="wd" style="left:1175.3px;top:484.0px;font-size:14px;transform:scale(1.0409);color:#fbb040">演示搜索词</span>
<span class="wd" style="left:1256.0px;top:492.6px;font-size:14px;transform:scale(1.0497);color:#5ad8a6">演示搜索词</span>
<span class="wd" style="left:1338.0px;top:492.1px;font-size:15px;transform:scale(1.0136);color:#5ad8a6">演示搜索词</span>
<span class="wd" style="left:1417.7px;top:492.1px;font-size:15px;transform:scale(1.0149);color:#5d7092">演示搜索词</span>
<span class="wd" style="left:1527.0px;top:482.6px;font-size:14px;transform:scale(1.0656);color:#5d7092">演示搜索词</span>
<span class="wd" style="left:1616.3px;top:492.5px;font-size:14px;transform:scale(1.0308);color:#5ad8a6">演示搜索词</span>
<span class="wd" style="left:1128.9px;top:500.6px;font-size:14px;transform:scale(1.0177);color:#73d0f4">演示搜索词</span>
<span class="wd" style="left:1128.9px;top:516.0px;font-size:14px;transform:scale(1.0032);color:#5d7092">演示搜索词</span>
<span class="wd" style="left:1200.5px;top:508.6px;font-size:14px;transform:scale(1.0206);color:#5d7092">演示搜索词</span>
<span class="wd" style="left:1279.4px;top:508.5px;font-size:14px;transform:scale(1.0308);color:#fbb040">演示搜索词</span>
<span class="wd" style="left:1359.0px;top:508.2px;font-size:14px;transform:scale(1.0656);color:#fbb040">演示搜索词</span>
<span class="wd" style="left:1447.3px;top:508.2px;font-size:14px;transform:scale(1.0671);color:#73d0f4">演示搜索词</span>
<span class="wd" style="left:1535.5px;top:500.0px;font-size:14px;transform:scale(1.0308);color:#fbb040">演示搜索词</span>
<span class="wd" style="left:1617.5px;top:508.7px;font-size:13px;transform:scale(1.0710);color:#fbb040">演示搜索词</span>
<span class="wd" style="left:1215.7px;top:524.5px;font-size:14px;transform:scale(1.0308);color:#5ad8a6">演示搜索词</span>
<span class="wd" style="left:1288.0px;top:524.5px;font-size:14px;transform:scale(1.0308);color:#fbb040">演示搜索词</span>
<span class="wd" style="left:1360.0px;top:524.5px;font-size:14px;transform:scale(1.0308);color:#7b6ff5">演示搜索词</span>
<span class="wd" style="left:1432.4px;top:524.6px;font-size:14px;transform:scale(1.0163);color:#5ad8a6">演示搜索词</span>
<span class="wd" style="left:1535.5px;top:515.9px;font-size:14px;transform:scale(1.0308);color:#fbb040">演示搜索词</span>
<span class="wd" style="left:1609.0px;top:523.4px;font-size:14px;transform:scale(1.0119);color:#fbb040">演示搜索词</span>
<div class="a" style="left:981px;top:217px;width:160px;height:394px;border:1px solid #5ad8a6;border-radius:4px;background:rgba(255,255,255,0.9);box-shadow:2px 2px 10px rgba(0,0,0,0.12)">
<div class="a" style="left:10px;top:17px;width:6px;height:6px;border-radius:50%;background:#5ad8a6"></div>
<span class="a tt" style="left:26px;top:13px;color:#333">演示搜索词</span>
<span class="a tt" style="left:10px;top:44px;color:#999">广告花费</span><span class="a tt" style="left:80px;top:39.5px;color:#222">214.90</span><span class="a tt" style="left:10px;top:68px;color:#999">广告销售额</span><span class="a tt" style="left:80px;top:63.5px;color:#222">1,083.71</span><span class="a tt" style="left:10px;top:92px;color:#999">ACoS</span><span class="a tt" style="left:80px;top:87.5px;color:#222">19.83%</span><span class="a tt" style="left:10px;top:116px;color:#999">ROAS</span><span class="a tt" style="left:80px;top:111.5px;color:#222">5.04</span><span class="a tt" style="left:10px;top:152px;color:#999">广告曝光量</span><span class="a tt" style="left:80px;top:147.5px;color:#222">222,669</span><span class="a tt" style="left:10px;top:176px;color:#999">广告点击量</span><span class="a tt" style="left:80px;top:171.5px;color:#222">544</span><span class="a tt" style="left:10px;top:200px;color:#999">广告订单量</span><span class="a tt" style="left:80px;top:195.5px;color:#222">24</span><span class="a tt" style="left:10px;top:224px;color:#999">广告点击率</span><span class="a tt" style="left:80px;top:219.5px;color:#222">0.24%</span><span class="a tt" style="left:10px;top:248px;color:#999">广告转化率</span><span class="a tt" style="left:80px;top:243.5px;color:#222">4.41%</span><span class="a tt" style="left:10px;top:272px;color:#999">广告销量</span><span class="a tt" style="left:80px;top:267.5px;color:#222">24</span><span class="a tt" style="left:10px;top:309px;color:#999">CPC</span><span class="a tt" style="left:80px;top:304.5px;color:#222">0.40</span><span class="a tt" style="left:10px;top:333px;color:#999">CPA</span><span class="a tt" style="left:80px;top:328.5px;color:#222">8.95</span><span class="a tt" style="left:10px;top:370px;color:#999">投放数</span><span class="a tt" style="left:80px;top:365.5px;color:#222">17</span><div class="a" style="left:10px;top:138px;width:130px;height:1px;background:#eceef2"></div><div class="a" style="left:10px;top:295px;width:130px;height:1px;background:#eceef2"></div><div class="a" style="left:10px;top:356px;width:130px;height:1px;background:#eceef2"></div></div>
<div class="a" style="left:974px;top:214px;width:179px;height:407px;border:3px solid #fa2d2d"></div>
<div class="a" style="left:1503px;top:380px;width:120px;height:30px;border:3px solid #fa2d2d"></div>
<div class="a" style="left:1746px;top:159px;width:50px;height:47px;border:3px solid #fa2d2d"></div>
<div class="a" style="left:1681px;top:115px;width:187px;height:42px;background:rgba(0,0,0,0.6);border-radius:4px"></div><svg class="a" style="left:1673px;top:128.5px" width="8" height="15" viewBox="0 0 8 15"><path d="M8 0 L0 7.5 L8 15 Z" fill="rgba(0,0,0,0.6)"/></svg><span class="a" style="left:1690px;top:125.0px;font-size:16px;line-height:22px;color:#fff;white-space:nowrap">点击切换词云展示形式</span><div class="a" style="left:1637px;top:121px;width:30px;height:30px;border-radius:50%;background:#f5343a;color:#fff;font-size:20px;line-height:30px;text-align:center">1</div>
<div class="a" style="left:1185px;top:339px;width:395px;height:41px;background:rgba(0,0,0,0.6);border-radius:4px"></div><svg class="a" style="left:1177px;top:352.0px" width="8" height="15" viewBox="0 0 8 15"><path d="M8 0 L0 7.5 L8 15 Z" fill="rgba(0,0,0,0.6)"/></svg><span class="a" style="left:1194px;top:348.5px;font-size:16px;line-height:22px;color:#fff;white-space:nowrap">点击具体搜索词，可以查看对应产生的广告数据情况</span><div class="a" style="left:1140.5px;top:345px;width:30px;height:30px;border-radius:50%;background:#f5343a;color:#fff;font-size:20px;line-height:30px;text-align:center">2</div>
</body></html>
